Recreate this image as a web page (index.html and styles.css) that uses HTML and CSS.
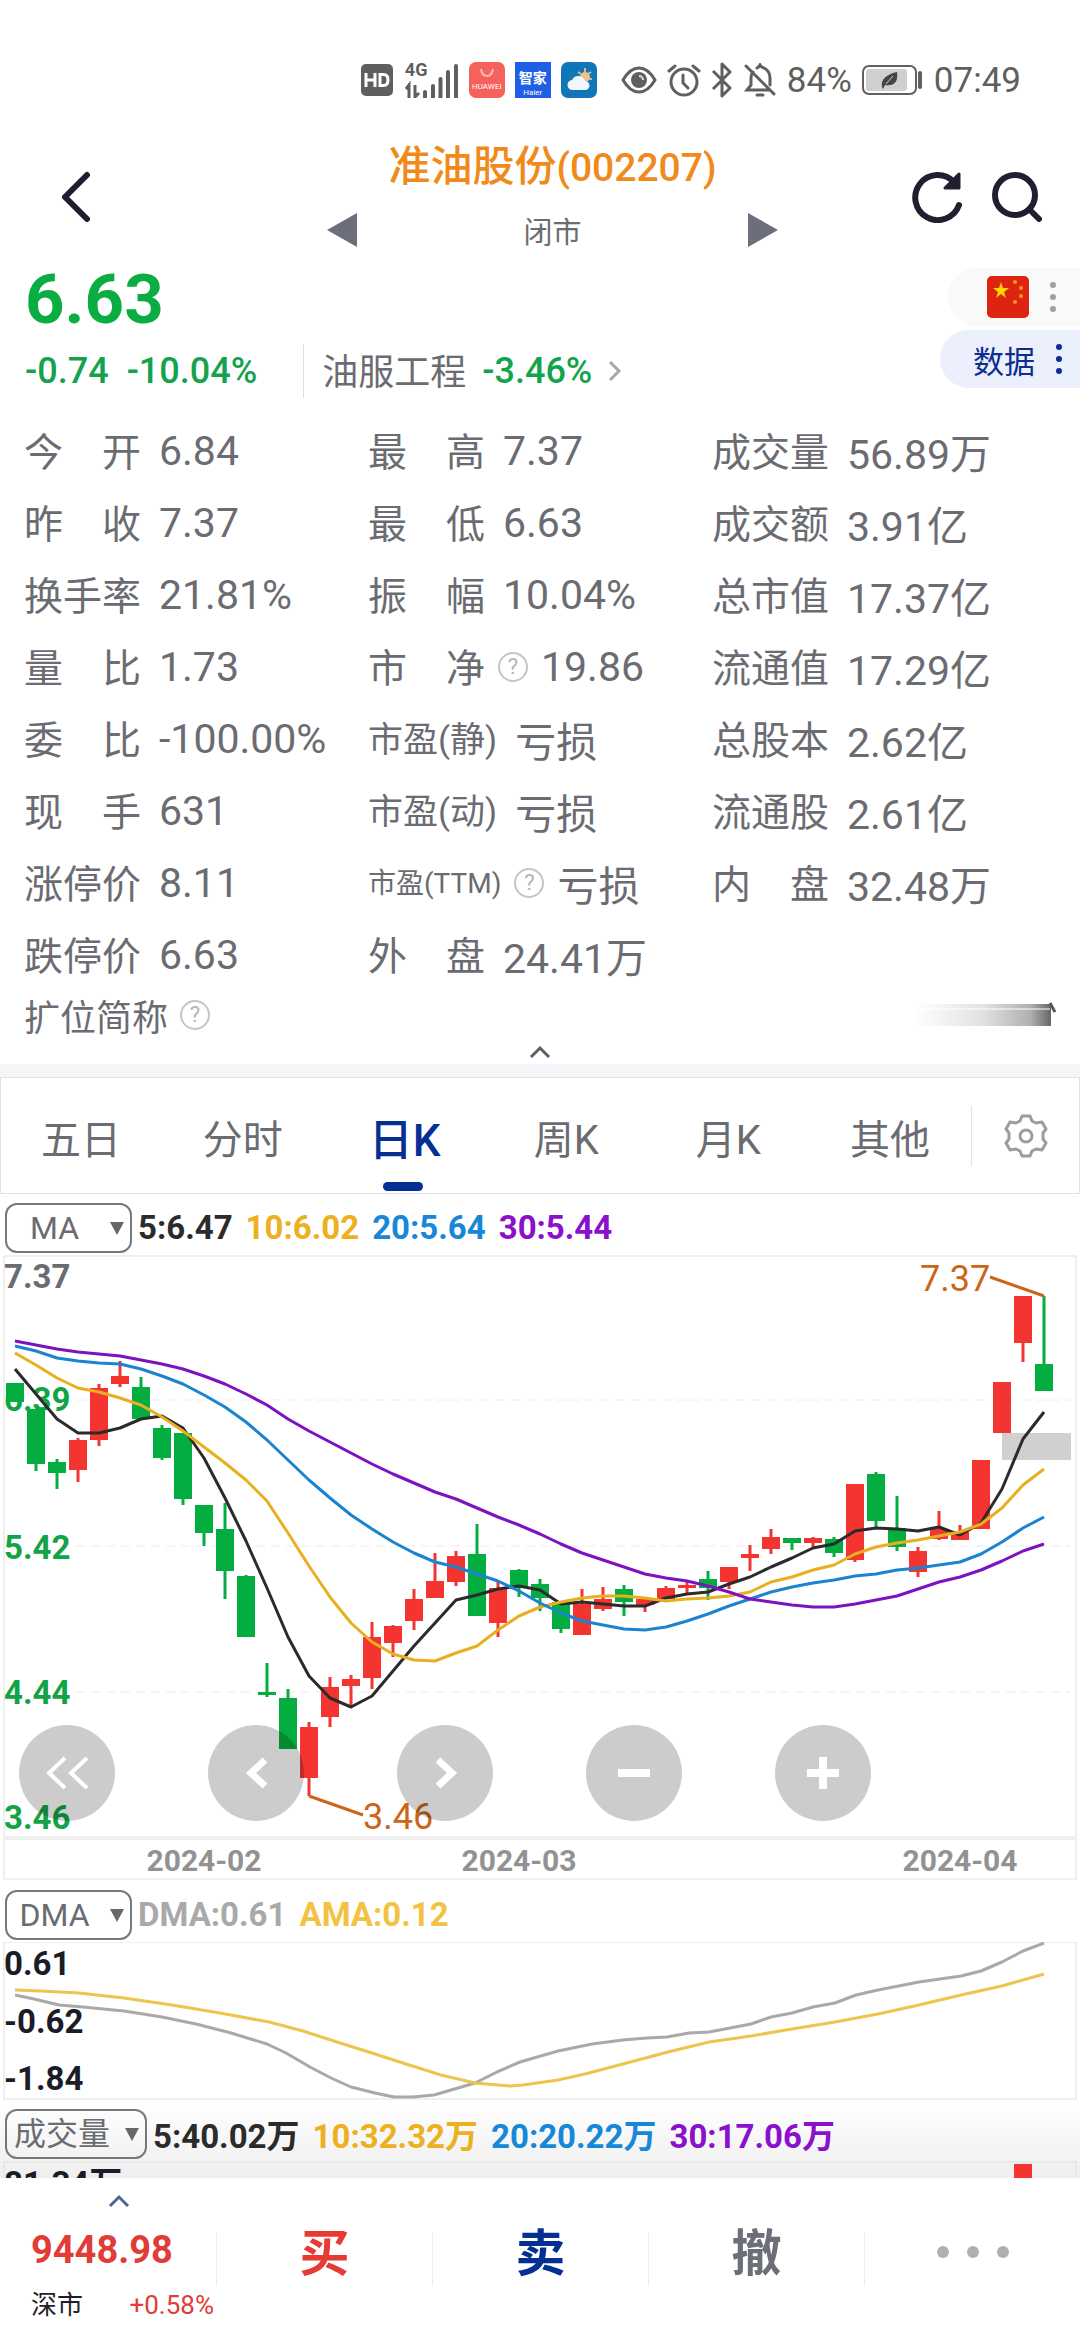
FILE: index.html
```html
<!DOCTYPE html>
<html lang="zh-CN">
<head>
  <meta charset="UTF-8" />
  <meta name="viewport" content="width=device-width, initial-scale=1.0" />
  <title>准油股份(002207)</title>
  <link rel="stylesheet" href="styles.css">
</head>
<body>

  <div class="app">

    <div class="status-bar">
      <svg class="hd" width="32" height="32" viewBox="0 0 32 32">
        <rect width="32" height="32" rx="5" fill="#5f5f5f"/>
        <path d="M5 9v14M14 9v14M5 16h9M19 10.500v11h3.500q4.500 0 4.500-5.500t-4.500-5.500z" fill="none" stroke="#fff" stroke-width="3"/>
      </svg>
      <div class="signal">
        <span class="net">4G</span>
        <svg width="54" height="35" viewBox="0 0 54 35">
          <path d="M4 35V22l-3 4M10 22v12l4-4" fill="none" stroke="#5f5f5f" stroke-width="3"/>
          <path d="M20 29v5M28 23v11M35.500 16v18M43 9v25M51 3v31" stroke="#5f5f5f" stroke-width="4" stroke-linecap="round"/>
        </svg>
      </div>
      <div class="badge badge-huawei">
        <svg width="16" height="10" viewBox="0 0 16 10"><path d="M2 1q1 7 6 7t6-7" fill="none" stroke="#ffb9b4" stroke-width="2"/></svg>
        <span>HUAWEI</span>
      </div>
      <div class="badge badge-haier"><b>智家</b><span>Haier</span></div>
      <svg class="weather" width="36" height="36" viewBox="0 0 36 36">
        <rect width="36" height="36" rx="7" fill="#0f76b8"/>
        <path d="M24 6v4M17 10l3 2M30 10l-3 2M31 17h-3" stroke="#d9b98a" stroke-width="2"/>
        <circle cx="24" cy="15" r="5" fill="#e8c38c"/>
        <path d="M12 28a5 5 0 0 1-1-10 7 7 0 0 1 13 1 4.500 4.500 0 0 1 0 9z" fill="#f1f6fc"/>
      </svg>
      <svg class="eye" width="36" height="30" viewBox="0 0 36 30" fill="none" stroke="#5f5f5f" stroke-width="3">
        <path d="M2 15Q9 3 18 3t16 12Q27 27 18 27T2 15z"/>
        <circle cx="18" cy="15" r="8" fill="#5f5f5f" stroke="none"/>
        <path d="M18 11a4 4 0 0 1 4 4" stroke="#ddd" stroke-width="2"/>
      </svg>
      <svg class="alarm" width="34" height="34" viewBox="0 0 34 34" fill="none" stroke="#5f5f5f" stroke-width="3" stroke-linecap="round">
        <circle cx="17" cy="19" r="13"/>
        <path d="M16 12v8l5 5M2 8l6-5M32 8l-6-5"/>
      </svg>
      <svg class="bluetooth" width="22" height="36" viewBox="0 0 22 36" fill="none" stroke="#5f5f5f" stroke-width="3" stroke-linejoin="round">
        <path d="M2 9l17 17-8 8V2l8 8L2 27"/>
      </svg>
      <svg class="bell" width="34" height="34" viewBox="0 0 34 34" fill="none" stroke="#5f5f5f" stroke-width="3" stroke-linecap="round">
        <path d="M3 3l28 28M10 9Q8 11 8 15v7l-4 5h22M14 5q2-1 3-3 1 2 4 3 6 3 6 10v7"/>
        <path d="M14 32h6"/>
      </svg>
      <span class="status-text">84%</span>
      <svg class="battery" width="62" height="30" viewBox="0 0 62 30">
        <rect x="1" y="1" width="53" height="28" rx="6" fill="#fff" stroke="#5f5f5f" stroke-width="2"/>
        <rect x="4" y="4" width="41" height="22" rx="3" fill="#cfcfcf"/>
        <path d="M20 22q-2-11 15-15 2 15-12 13l-2 4z" fill="#454545"/>
        <path d="M24 19l7-8" stroke="#cfcfcf"/>
        <path d="M58 8v14" stroke="#5f5f5f" stroke-width="4" stroke-linecap="round"/>
      </svg>
      <span class="status-text">07:49</span>
    </div>

    <header class="header">
      <button class="icon-btn back" aria-label="返回">
        <svg width="32" height="52" viewBox="0 0 32 52"><path d="M27 4L5 26l22 22" fill="none" stroke="#1f1f30" stroke-width="6" stroke-linecap="round" stroke-linejoin="round"/></svg>
      </button>
      <div class="stock">
        <h1>准油股份<span>(002207)</span></h1>
        <div class="stock-switch">
          <button class="icon-btn" aria-label="上一只"><svg width="30" height="34" viewBox="0 0 30 34"><path d="M30 0v34L0 17z" fill="#6c6e7b"/></svg></button>
          <span>闭市</span>
          <button class="icon-btn" aria-label="下一只"><svg width="30" height="34" viewBox="0 0 30 34"><path d="M0 0v34l30-17z" fill="#6c6e7b"/></svg></button>
        </div>
      </div>
      <div class="header-actions">
        <button class="icon-btn" aria-label="刷新">
          <svg width="52" height="52" viewBox="0 0 52 52" fill="none" stroke="#1f1f30" stroke-width="6" stroke-linecap="round">
            <path d="M48 34A22.500 22.500 0 1 1 43 11"/>
            <path d="M48 3v14H34z" fill="#1f1f30" stroke="#1f1f30" stroke-width="3" stroke-linejoin="round"/>
          </svg>
        </button>
        <button class="icon-btn" aria-label="搜索">
          <svg width="52" height="52" viewBox="0 0 52 52" fill="none" stroke="#1f1f30" stroke-width="6" stroke-linecap="round">
            <circle cx="24" cy="24" r="20"/>
            <path d="M40 40l8 8"/>
          </svg>
        </button>
      </div>
    </header>

    <section class="quote">
      <div class="quote-main">
        <div class="price">6.63</div>
        <div class="change">
          <span class="change-value">-0.74</span>
          <span class="change-value">-10.04%</span>
          <a class="sector" href="#">
            <span class="sector-name">油服工程</span>
            <span class="sector-change">-3.46%</span>
            <svg width="14" height="22" viewBox="0 0 14 22"><path d="M2 2l9 9-9 9" fill="none" stroke="#a5a7ad" stroke-width="3"/></svg>
          </a>
        </div>
      </div>
      <div class="chips">
        <button class="chip chip-flag" aria-label="中国">
          <svg width="42" height="42" viewBox="0 0 42 42">
            <rect width="42" height="42" rx="5" fill="#de2410"/>
            <path d="M14 6l2 6h6l-5 4 2 6-5-4-5 4 2-6-5-4h6z" fill="#ffd400"/>
            <g fill="#f39a1c"><circle cx="28" cy="6" r="2"/><circle cx="34" cy="12" r="2"/><circle cx="34" cy="20" r="2"/><circle cx="28" cy="26" r="2"/></g>
          </svg>
          <svg width="8" height="32" viewBox="0 0 8 32" fill="#a0a0a0"><circle cx="4" cy="4" r="3"/><circle cx="4" cy="16" r="3"/><circle cx="4" cy="28" r="3"/></svg>
        </button>
        <button class="chip chip-data">
          数据
          <svg width="8" height="32" viewBox="0 0 8 32" fill="#0a2f8f"><circle cx="4" cy="4" r="3"/><circle cx="4" cy="16" r="3"/><circle cx="4" cy="28" r="3"/></svg>
        </button>
      </div>
    </section>

    <dl class="stats">
      <div><dt>今　开</dt><dd>6.84</dd></div>
      <div><dt>最　高</dt><dd>7.37</dd></div>
      <div><dt>成交量</dt><dd>56.89万</dd></div>
      <div><dt>昨　收</dt><dd>7.37</dd></div>
      <div><dt>最　低</dt><dd>6.63</dd></div>
      <div><dt>成交额</dt><dd>3.91亿</dd></div>
      <div><dt>换手率</dt><dd>21.81%</dd></div>
      <div><dt>振　幅</dt><dd>10.04%</dd></div>
      <div><dt>总市值</dt><dd>17.37亿</dd></div>
      <div><dt>量　比</dt><dd>1.73</dd></div>
      <div class="with-help"><dt>市　净</dt><button class="help" aria-label="市净说明">?</button><dd>19.86</dd></div>
      <div><dt>流通值</dt><dd>17.29亿</dd></div>
      <div><dt>委　比</dt><dd>-100.00%</dd></div>
      <div><dt class="medium">市盈(静)</dt><dd>亏损</dd></div>
      <div><dt>总股本</dt><dd>2.62亿</dd></div>
      <div><dt>现　手</dt><dd>631</dd></div>
      <div><dt class="medium">市盈(动)</dt><dd>亏损</dd></div>
      <div><dt>流通股</dt><dd>2.61亿</dd></div>
      <div><dt>涨停价</dt><dd>8.11</dd></div>
      <div class="with-help"><dt class="small">市盈(TTM)</dt><button class="help" aria-label="市盈说明">?</button><dd>亏损</dd></div>
      <div><dt>内　盘</dt><dd>32.48万</dd></div>
      <div><dt>跌停价</dt><dd>6.63</dd></div>
      <div><dt>外　盘</dt><dd>24.41万</dd></div>
    </dl>

    <div class="alias">
      <span>扩位简称</span>
      <button class="help" aria-label="扩位简称说明">?</button>
      <svg class="alias-fade" width="142" height="26" viewBox="0 0 142 26">
        <defs><linearGradient id="fade"><stop offset="0" stop-color="#fff"/><stop offset=".5" stop-color="#e2e2e2"/><stop offset=".85" stop-color="#b0b0b0"/><stop offset="1" stop-color="#666"/></linearGradient></defs>
        <path d="M0 2h137v22H0z" fill="url(#fade)"/>
        <path d="M0 7h136" stroke="#fff" stroke-opacity=".5" stroke-width="2"/>
        <path d="M136 1l5 9" stroke="#555" stroke-width="3"/>
      </svg>
    </div>
    <button class="icon-btn collapse" aria-label="收起">
      <svg width="22" height="14" viewBox="0 0 22 14"><path d="M2 12l9-9 9 9" fill="none" stroke="#5e5f66" stroke-width="3"/></svg>
    </button>

    <nav class="tabs">
      <button>五日</button>
      <button>分时</button>
      <button class="active">日K</button>
      <button>周K</button>
      <button>月K</button>
      <button>其他</button>
      <button class="settings" aria-label="设置">
        <svg width="46" height="46" viewBox="0 0 46 46" fill="none" stroke="#9b9ca2" stroke-width="3" stroke-linejoin="round">
          <path d="M19 3h8l2 5 4 2 6-1 4 7-3 4v6l3 4-4 7-6-1-4 2-2 5h-8l-2-5-4-2-6 1-4-7 3-4v-6l-3-4 4-7 6 1 4-2z"/>
          <circle cx="23" cy="23" r="6"/>
        </svg>
      </button>
    </nav>

    <main class="charts">
      <div class="legend">
        <label class="picker"><select aria-label="主图指标"><option>MA</option></select></label>
        <span class="c-black">5:6.47</span>
        <span class="c-orange">10:6.02</span>
        <span class="c-blue">20:5.64</span>
        <span class="c-purple">30:5.44</span>
      </div>

      <div class="k-chart">
        <svg viewBox="0 0 1080 626">
          <g class="frame">
            <rect x="4" y="1" width="1072" height="581"/>
            <rect x="4" y="584" width="1072" height="40"/>
          </g>
          <path class="grid" d="M76 145H1071M76 291H1071M76 437H1071"/>
          <g class="axis-up">
            <text class="axis-mid" x="4" y="33">7.37</text>
            <text x="4" y="156">6.39</text>
            <text x="4" y="304">5.42</text>
            <text x="4" y="449">4.44</text>
            <text x="4" y="574">3.46</text>
          </g>
          <rect class="gap" x="1002" y="178" width="69" height="27"/>

          <!-- wicks, then bodies -->
          <path class="wick up" d="M78 183V227M99 129V191M120 106V132M309 467V541M330 422V472M351 420V451M372 367V434M393 370V402M414 334V375M435 298V343M456 296V331M498 327V382M582 334V380M603 332V356M645 344V357M666 331V344M687 327V340M729 312V334M750 290V316M771 274V299M813 282V292M855 229V307M918 292V322M939 256V285M960 270V285M1023 41V107"/>
          <path class="wick down" d="M36 154V216M57 204V234M141 122V164M162 170V205M183 178V250M204 250V291M225 248V344M246 320V382M267 408V442M288 434V494M477 269V361M519 314V342M540 324V356M561 347V378M624 330V361M708 316V345M792 283V295M834 282V302M876 217V272M897 241V296M1044 41V136"/>
          <path class="body up" d="M78 185V215M99 133V185M120 121V129M309 472V523M330 432V462M351 424V431M372 382V423M393 371V388M414 344V366M435 326V343M456 301V327M498 333V368M582 349V380M603 344V354M645 344V350M666 333V344M687 330V333M729 312V327M750 299V303M771 282V294M813 283V288M855 229V305M918 296V317M939 274V284M960 277V285M981 205V274M1002 127V178M1023 41V88"/>
          <path class="body down" d="M15 128V147M36 154V209M57 207V218M141 132V164M162 173V203M183 178V244M204 250V278M225 274V316M246 321V382M267 437V440M288 443V494M477 299V361M519 315V333M540 329V343M561 347V374M624 334V347M708 324V333M792 283V288M834 284V298M876 219V266M897 273V292M1044 109V136"/>

          <polyline class="line s-black" points="15,114 36,139 57,164 78,178 99,178 120,173 141,164 162,161 183,173 204,203 225,243 246,286 267,333 288,382 309,421 330,443 351,452 372,441 393,416 414,391 435,368 456,345 477,340 498,334 519,331 540,335 561,349 582,347 603,349 624,351 645,351 666,343 687,339 708,337 729,329 750,322 771,312 792,303 813,293 834,289 855,276 876,273 897,274 918,276 939,272 960,280 981,268 1002,234 1023,184 1044,157"/>
          <polyline class="line s-orange" points="15,98 36,110 57,123 78,133 99,137 120,143 141,150 162,162 183,176 204,192 225,208 246,225 267,246 288,278 309,311 330,342 351,368 372,387 393,399 414,405 435,406 456,398 477,391 498,375 519,361 540,352 561,347 582,343 603,341 624,341 645,343 666,346 687,344 708,343 729,341 750,337 771,327 792,322 813,315 834,310 855,299 876,292 897,288 918,285 939,281 960,277 981,269 1002,253 1023,230 1044,214"/>
          <polyline class="line s-blue" points="15,91 36,96 57,103 78,106 99,108 120,109 141,114 162,121 183,129 204,140 225,152 246,167 267,185 288,205 309,225 330,243 351,260 372,274 393,287 414,298 435,307 456,312 477,319 498,326 519,336 540,348 561,358 582,366 603,370 624,374 645,375 666,372 687,366 708,359 729,351 750,344 771,337 792,332 813,328 834,325 855,321 876,319 897,315 918,313 939,310 960,307 981,299 1002,287 1023,273 1044,262"/>
          <polyline class="line s-purple" points="15,86 36,90 57,94 78,97 99,99 120,101 141,105 162,109 183,114 204,121 225,129 246,139 267,150 288,164 309,176 330,187 351,198 372,209 393,219 414,228 435,237 456,244 477,253 498,262 519,270 540,279 561,289 582,298 603,305 624,312 645,319 666,323 687,326 708,331 729,337 750,344 771,347 792,350 813,352 834,352 855,349 876,345 897,341 918,334 939,327 960,322 981,315 1002,306 1023,296 1044,289"/>

          <g class="extreme">
            <path d="M990 22L1044 41M309 541L363 560"/>
            <text x="920" y="36">7.37</text>
            <text x="363" y="574">3.46</text>
          </g>
          <g class="dates">
            <text x="204" y="616">2024-02</text>
            <text x="519" y="616">2024-03</text>
            <text x="960" y="616">2024-04</text>
          </g>
        </svg>
        <div class="chart-tools">
          <button aria-label="最早"><svg width="44" height="36" viewBox="0 0 44 36"><path d="M20 3L4 18l16 15M42 3L26 18l16 15" stroke-width="4"/></svg></button>
          <button aria-label="左移"><svg width="44" height="36" viewBox="0 0 44 36"><path d="M31 5L17 18l14 13" stroke-width="7"/></svg></button>
          <button aria-label="右移"><svg width="44" height="36" viewBox="0 0 44 36"><path d="M15 5l14 13-14 13" stroke-width="7"/></svg></button>
          <button aria-label="缩小"><svg width="44" height="36" viewBox="0 0 44 36"><path d="M6 18h32" stroke-width="8"/></svg></button>
          <button aria-label="放大"><svg width="44" height="36" viewBox="0 0 44 36"><path d="M6 18h32M22 2v32" stroke-width="8"/></svg></button>
        </div>
      </div>

      <div class="legend">
        <label class="picker"><select aria-label="副图指标"><option>DMA</option></select></label>
        <span class="c-gray">DMA:0.61</span>
        <span class="c-yellow">AMA:0.12</span>
      </div>
      <svg class="dma-chart" viewBox="0 0 1080 158">
        <rect class="frame" x="4" y="0" width="1072" height="157"/>
        <polyline class="line s-gray" points="15,53 34,57 59,63 83,65 124,69 162,75 196,82 231,91 267,102 286,111 310,125 331,136 351,145 375,151 394,155 413,155 434,153 475,141 497,130 520,120 558,109 592,102 623,98 647,96 667,95 689,91 709,90 751,82 771,75 792,71 813,65 835,61 856,53 878,48 919,40 961,34 981,29 1002,20 1023,9 1044,1"/>
        <polyline class="line s-yellow" points="15,48 41,49 79,51 124,56 172,63 220,71 269,80 303,89 337,100 372,111 406,122 441,133 475,141 510,144 523,143 558,138 585,132 623,122 668,110 709,100 751,94 792,87 835,80 878,72 919,63 961,53 1002,44 1044,32"/>
        <g class="axis">
          <text x="4" y="33">0.61</text>
          <text x="4" y="91">-0.62</text>
          <text x="4" y="148">-1.84</text>
        </g>
      </svg>

      <div class="volume">
        <div class="legend">
          <label class="picker picker-wide"><select aria-label="成交量指标"><option>成交量</option></select></label>
          <span class="c-black">5:40.02万</span>
          <span class="c-orange">10:32.32万</span>
          <span class="c-blue">20:20.22万</span>
          <span class="c-purple">30:17.06万</span>
        </div>
        <svg viewBox="0 0 1080 120">
          <rect class="frame" x="4" y="1" width="1072" height="118"/>
          <path class="body up" d="M1023 3V119"/>
          <g class="axis"><text x="4" y="34">81.34万</text></g>
        </svg>
      </div>
    </main>

    <footer class="trade-bar">
      <a class="index" href="#">
        <svg width="22" height="14" viewBox="0 0 22 14"><path d="M2 12l9-9 9 9" fill="none" stroke="#4a6796" stroke-width="3"/></svg>
        <strong>9448.98</strong>
        <span class="index-row"><span>深市</span><span class="index-change">+0.58%</span></span>
      </a>
      <button class="buy">买</button>
      <button class="sell">卖</button>
      <button class="cancel">撤</button>
      <button class="more" aria-label="更多">
        <svg width="74" height="14" viewBox="0 0 74 14" fill="#b0b0b0"><circle cx="7" cy="7" r="6"/><circle cx="37" cy="7" r="6"/><circle cx="67" cy="7" r="6"/></svg>
      </button>
    </footer>

  </div>

</body>
</html>
```
FILE: styles.css
```css
* {
  box-sizing: border-box;
}

body {
  margin: 0;
  background: #fff;
  color: #6b6c72;
  font-family: Roboto, "Noto Sans CJK SC", sans-serif;
}

button,
select {
  font: inherit;
  color: inherit;
  background: none;
  border: none;
  padding: 0;
  cursor: pointer;
}

a {
  color: inherit;
  text-decoration: none;
}

svg {
  display: block;
  flex: none;
}

.app {
  display: flex;
  flex-direction: column;
  height: 100vh;
  overflow: hidden;
}

.app > * {
  flex: none;
}

.icon-btn {
  display: flex;
  align-items: center;
  justify-content: center;
}

/* status bar */
.status-bar {
  display: flex;
  align-items: center;
  justify-content: flex-end;
  gap: 10px;
  height: 132px;
  padding: 28px 59px 0 0;
}

.signal {
  position: relative;
  margin: 0 0 0 2px;
}

.net {
  position: absolute;
  left: 0;
  top: -3px;
  font-size: 18px;
  line-height: 20px;
  font-weight: bold;
  color: #5f5f5f;
}

.badge {
  display: flex;
  flex-direction: column;
  align-items: center;
  justify-content: space-between;
  width: 36px;
  height: 36px;
  padding: 6px 0;
  color: #fff;
  font-size: 8px;
  line-height: 10px;
}

.badge-huawei {
  background: #f5625d;
  border-radius: 7px;
}

.badge-haier {
  background: #1f5fe6;
  padding: 7px 0 0;
}

.badge-haier b {
  font-size: 14px;
  line-height: 18px;
}

.weather {
  margin-right: 14px;
}

.status-text {
  font-size: 35px;
  color: #5f5f5f;
}

/* header */
.header {
  display: grid;
  grid-template-columns: 1fr 452px 1fr;
  align-items: center;
  height: 130px;
  padding-left: 25px;
}

.back {
  justify-self: start;
  margin-left: 35px;
}

.stock {
  display: flex;
  flex-direction: column;
}

.stock h1 {
  margin: 0;
  font-size: 42px;
  line-height: 64px;
  font-weight: 500;
  color: #f08a1a;
  text-align: center;
}

.stock h1 span {
  font-size: 39px;
}

.stock-switch {
  display: flex;
  align-items: center;
  justify-content: space-between;
  height: 60px;
  font-size: 29px;
}

.header-actions {
  display: flex;
  justify-content: flex-end;
  gap: 28px;
  padding-right: 37px;
}

/* price */
.quote {
  display: flex;
  justify-content: space-between;
  height: 148px;
  padding: 6px 0 0 25px;
}

.price {
  font-size: 69px;
  line-height: 64px;
  font-weight: bold;
  color: #0aad42;
}

.change {
  display: flex;
  align-items: center;
  gap: 18px;
  height: 78px;
}

.change-value,
.sector-change {
  font-size: 36px;
  font-weight: 500;
  color: #14a34c;
}

.sector {
  display: flex;
  align-items: center;
  gap: 16px;
  height: 54px;
  margin-left: 28px;
  padding-left: 18px;
  border-left: 1px solid #dedede;
  font-size: 36px;
}

.sector-name {
  padding-bottom: 4px;
}

.chips {
  display: flex;
  flex-direction: column;
  align-items: flex-end;
  gap: 4px;
}

.chip {
  display: flex;
  align-items: center;
  justify-content: flex-end;
  gap: 20px;
  height: 58px;
  border-radius: 29px 0 0 29px;
}

.chip-flag {
  width: 132px;
  padding-right: 23px;
  background: #f9f9fa;
}

.chip-data {
  width: 140px;
  padding-right: 17px;
  background: #eceffc;
  color: #0a2f8f;
  font-size: 31px;
}

/* stats */
.stats {
  display: grid;
  grid-template-columns: repeat(3, 1fr);
  grid-auto-rows: 72px;
  margin: 0;
  padding: 5px 24px 0 24px;
}

.stats div {
  display: flex;
  align-items: center;
  gap: 18px;
  white-space: nowrap;
}

.stats .with-help {
  gap: 13px;
}

.stats dt {
  padding-bottom: 5px;
  font-size: 39px;
}

.stats .medium {
  font-size: 35px;
}

.stats .small {
  font-size: 28px;
}

.stats dd {
  margin: 0;
  font-size: 41px;
}

.help {
  flex: none;
  width: 30px;
  height: 30px;
  border: 2px solid #c4c4c4;
  border-radius: 50%;
  color: #b4b4b4;
  font-size: 22px;
  line-height: 26px;
}

.alias {
  display: flex;
  align-items: center;
  gap: 12px;
  height: 48px;
  padding: 0 24px;
  font-size: 36px;
}

.alias-fade {
  margin-left: auto;
}

.collapse {
  height: 25px;
}

/* period tabs */
.tabs {
  display: flex;
  height: 130px;
  border-top: 13px solid #f5f6fa;
  box-shadow: inset 0 0 0 1px #e0e2e5;
}

.tabs button {
  position: relative;
  flex: 1;
  font-size: 40px;
  padding-top: 2px;
}

.tabs .active {
  font-size: 44px;
  font-weight: 500;
  color: #052f93;
}

.tabs .active::after {
  content: "";
  position: absolute;
  left: 50%;
  bottom: 3px;
  width: 40px;
  height: 9px;
  margin-left: -22px;
  border-radius: 5px;
  background: #052f93;
}

.tabs .settings {
  display: flex;
  align-items: center;
  justify-content: center;
  flex: none;
  align-self: center;
  width: 109px;
  height: 60px;
  padding: 0;
  border-left: 1px solid #e3e3e6;
}

/* charts */
.charts {
  flex: 1 1 0;
  min-height: 0;
  overflow: hidden;
}

.charts svg {
  width: 100%;
}

.legend {
  display: flex;
  align-items: center;
  gap: 13px;
  height: 61px;
  padding: 6px 5px 0;
  font-size: 33px;
  font-weight: bold;
  white-space: nowrap;
}

.picker {
  position: relative;
  flex: none;
  width: 127px;
  margin-right: -7px;
  font-size: 32px;
  font-weight: normal;
}

.picker select {
  display: block;
  appearance: none;
  width: 100%;
  height: 50px;
  padding-right: 28px;
  border: 2px solid #77787c;
  border-radius: 12px;
  text-align-last: center;
}

.picker::after {
  content: "";
  position: absolute;
  right: 8px;
  top: 19px;
  border: 7px solid transparent;
  border-top: 13px solid #66676c;
  border-bottom: none;
}

.picker-wide {
  width: 142px;
}

.c-black { color: #2b2b2b; }
.c-orange { color: #ecb021; }
.c-blue { color: #1787d8; }
.c-purple { color: #8a10cc; }
.c-gray { color: #a9a9a9; }
.c-yellow { color: #f2c242; }

.k-chart {
  position: relative;
}

.frame {
  fill: none;
  stroke: #e0e0e0;
}

.grid {
  stroke: #ececec;
  stroke-dasharray: 9 6;
}

.gap {
  fill: #d0d0d0;
}

.wick {
  fill: none;
  stroke-width: 3;
}

.body {
  fill: none;
  stroke-width: 18;
}

.up { stroke: #f33430; }
.down { stroke: #04ad40; }

.line {
  fill: none;
  stroke-width: 3;
  stroke-linejoin: round;
}

.s-black { stroke: #2b2b2b; }
.s-orange { stroke: #e8b021; }
.s-blue { stroke: #1a84d0; }
.s-purple { stroke: #7d12c0; }
.s-gray { stroke: #a9a9a9; }
.s-yellow { stroke: #ecc54c; }

.axis-up text,
.axis text {
  font-size: 33px;
  font-weight: bold;
  fill: #12a346;
}

.axis-up .axis-mid {
  fill: #6b6c72;
}

.axis text {
  fill: #1c1c28;
}

.extreme path {
  stroke: #cc6518;
  stroke-width: 3;
}

.extreme text {
  font-size: 36px;
  fill: #cc6518;
}

.dates text {
  font-size: 30px;
  font-weight: bold;
  text-anchor: middle;
  fill: #929292;
}

.chart-tools {
  position: absolute;
  left: 19px;
  bottom: 60px;
  display: flex;
  gap: 93px;
}

.chart-tools button {
  display: flex;
  align-items: center;
  justify-content: center;
  width: 96px;
  height: 96px;
  border-radius: 50%;
  background: rgba(0, 0, 0, 0.2);
}

.chart-tools svg {
  width: 44px;
  fill: none;
  stroke: #fff;
}

.volume {
  background: linear-gradient(#fff, #eee 80px);
}

/* bottom bar */
.trade-bar {
  display: grid;
  grid-template-columns: repeat(5, 1fr);
  height: 162px;
  background: #fff;
}

.trade-bar button {
  display: flex;
  align-items: center;
  justify-content: center;
  height: 54px;
  margin-top: 54px;
  padding-bottom: 10px;
  border-left: 1px solid #ececec;
  font-size: 50px;
  line-height: 50px;
  font-weight: bold;
}

.trade-bar .more {
  padding-bottom: 14px;
}

.trade-bar .buy { color: #e63a35; }
.trade-bar .sell { color: #052f93; }
.trade-bar .cancel { color: #6c6e78; }

.index {
  display: flex;
  flex-direction: column;
  padding: 16px 2px 0 31px;
  color: #1f1f2c;
}

.index svg {
  margin-left: 77px;
}

.index strong {
  margin-top: 18px;
  font-size: 38px;
  line-height: 48px;
  color: #e03c38;
}

.index-row {
  display: flex;
  justify-content: space-between;
  margin-top: 14px;
  font-size: 26px;
  line-height: 34px;
}

.index-change {
  color: #e03c38;
}
```
